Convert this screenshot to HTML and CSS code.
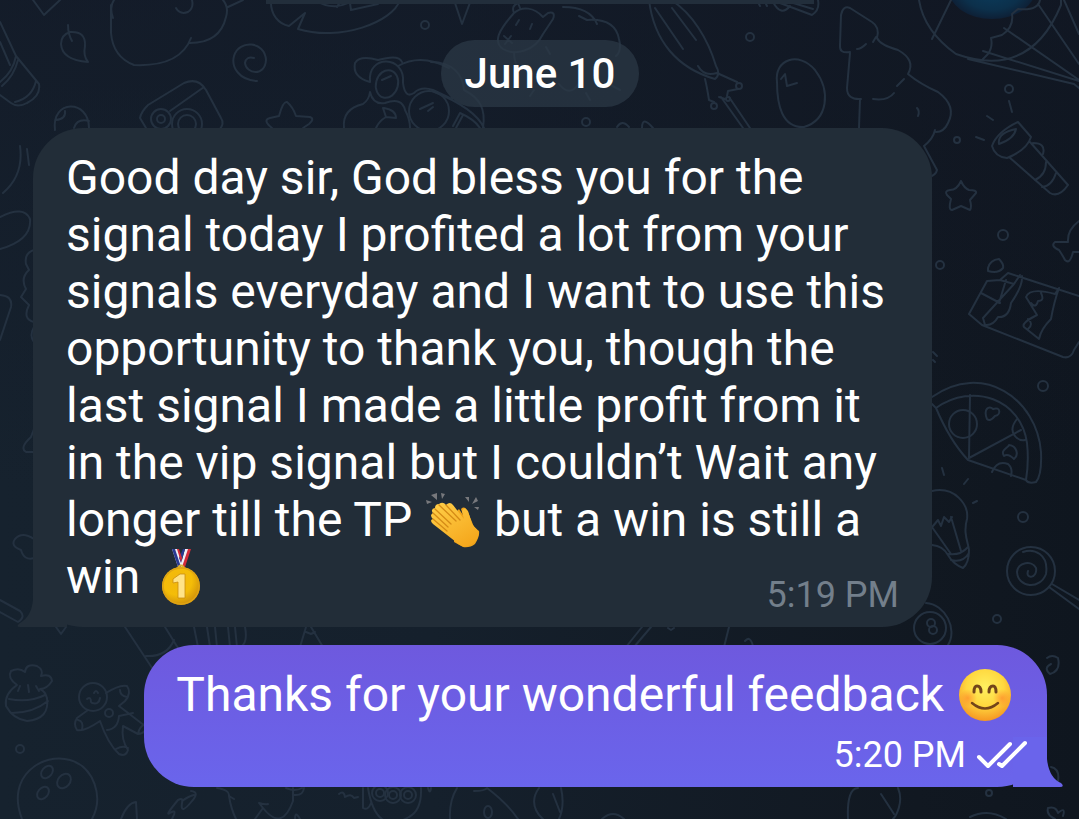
FILE: index.html
```html
<!DOCTYPE html>
<html lang="en">
<head>
    <meta charset="UTF-8">
    <meta name="viewport" content="width=device-width, initial-scale=1.0">
    <title>Chat</title>
    <link rel="stylesheet" href="styles.css">
</head>
<body>
    <!-- Wallpaper -->
    <svg class="wallpaper" viewBox="0 0 1079 819" preserveAspectRatio="xMidYMid slice" aria-hidden="true">
        <defs>
            <radialGradient id="glow" cx=".5" cy=".5" r=".5">
                <stop offset="0" stop-color="#0b3d5e"/>
                <stop offset=".7" stop-color="#0c304b"/>
                <stop offset="1" stop-color="#0e2036"/>
            </radialGradient>
        </defs>
        <ellipse cx="992" cy="-12" rx="44" ry="31" fill="url(#glow)"/>
        <g class="doodles">
            <!-- top left: crayon, leaf, cloud, spiral -->
            <path d="M33 0L44 15L60 0M0 22L16 56L39 84Q41 96 27 103Q18 108 11 103L0 95M0 42L10 65M16 56Q13 72 0 82M18 60Q14 76 2 86M36 81Q32 98 15 102"/>
            <path d="M68 25Q68 34 72 41M70 32Q61 35 61 44Q62 60 88 62Q83 56 85 46Q86 31 70 32"/>
            <path d="M114 0Q109 7 113 18M111 5V33Q113 57 134 65Q180 67 191 38M190 43Q220 43 226 17Q229 7 223 0M176 8Q180 15 188 12Q194 8 192 0M228 7L243 0"/>
            <path d="M257 81C239 80 231 67 234 56C239 39 265 41 266 60C265 77 246 74 245 63Q246 56 254 58"/>
            <path d="M271 0C270 15 279 24 289 26L305 13L298 29C340 42 393 22 400 0M315 0Q333 12 352 1M337 7L341 0M350 3L351 10L378 4"/>
            <circle cx="425" cy="25" r="4"/>
            <!-- egg, camera, star -->
            <path d="M55 130C51 99 89 99 89 128M65 111Q66 119 56 120M89 121Q77 118 74 128"/>
            <path d="M146 128L140 118Q141 112 148 105L184 83Q198 77 206 90L221 118Q225 124 219 130M204 87L170 111"/>
            <circle cx="161" cy="119" r="10"/><circle cx="161" cy="119" r="4"/>
            <circle cx="187" cy="124" r="15"/><circle cx="187" cy="124" r="9"/>
            <path d="M272 128Q262 120 270 118L279 116Q283 101 287 102Q293 107 296 116L310 117Q315 119 309 124L303 128"/>
            <!-- diver with goggles -->
            <path d="M370 82Q352 77 355 63Q360 55 378 60Q399 54 402 62M370 82C367 54 406 55 403 83Q405 99 414 93Q421 86 433 90L452 99M344 128Q342 109 363 104Q369 100 370 92Q373 105 385 103Q402 97 405 110Q410 119 410 128M398 66Q421 53 449 68M384 108Q396 110 396 118L386 117Q379 121 376 128M383 108L386 117M382 80L391 76M420 109L433 103M428 111L433 107"/>
            <ellipse cx="387" cy="84" rx="11" ry="14" transform="rotate(15 387 84)"/>
            <circle cx="429" cy="111" r="20"/>
            <path d="M431 62C453 62 463 75 464 90C480 98 486 109 483 128M432 91Q475 108 484 128M453 126L460 113Q474 119 480 128M456 128L463 115"/>
            <!-- sheep -->
            <path d="M454 0L462 24L471 0M514 13C498 31 493 42 503 49C515 56 535 51 543 34L553 19Q556 11 548 13L543 17C534 7 522 6 514 13Q511 6 518 3L520 8M514 52Q514 61 518 68M504 36L512 43M505 44L511 36M516 25L519 20M530 29L532 24M546 47L550 54M563 7Q590 7 597 24M587 20Q615 18 619 39Q622 51 616 56M579 16L587 20M559 84Q570 98 579 83M609 84L620 90M586 93L590 100M530 96L534 90"/>
            <circle cx="586" cy="122" r="4"/>
            <path d="M617 127Q622 119 629 127M642 128Q642 115 653 128"/>
            <!-- brush -->
            <path d="M649 0C654 41 677 68 715 79Q721 74 716 66C708 39 692 13 671 0M655 8L683 49M672 8L696 40M698 66Q704 77 717 73M705 79Q707 87 709 100L714 102M717 73L737 82M738 89L728 91L727 96M719 97Q722 98 725 99M721 97L743 128M729 97L750 128"/>
            <circle cx="739" cy="86" r="3"/><circle cx="714" cy="106" r="3"/><circle cx="728" cy="99" r="2"/>
            <circle cx="750" cy="37" r="4"/>
            <path d="M757 0L760 6M764 0L767 6M773 2Q781 17 790 6M780 3L812 15Q820 10 818 0M790 2L813 9"/>
            <path d="M777 82C774 59 799 51 815 70C831 91 828 120 804 127C782 128 777 105 777 82ZM781 79L785 74L787 86L797 83"/>
            <!-- tree -->
            <path d="M850 52Q839 54 840 45L841 15Q843 5 850 8L872 22Q880 27 877 38Q880 45 898 50Q916 60 908 74Q920 84 938 92Q957 106 948 123Q944 132 936 132M850 53L847 88Q847 100 861 99M860 99L859 128M935 130Q933 139 924 146M924 146L937 170Q936 175 929 177M876 37L873 42M857 49Q861 49 866 44M873 99Q888 101 894 93M897 86L904 79M917 108Q920 111 918 116"/>
            <!-- balloon -->
            <path d="M919 0Q924 31 956 54Q1030 80 1061 5V0M951 0L932 39M1040 0Q1038 11 1018 9L1012 14Q1014 27 1002 35L991 38Q993 47 988 54L983 59M1004 28L1079 80M983 51L1079 81M968 59L1074 84L1079 88M1064 0L1079 34M1038 4L1079 64"/>
            <!-- flashlight -->
            <circle cx="1009" cy="89" r="4"/><circle cx="957" cy="140" r="3"/>
            <path d="M1009 101L1012 112M987 116L993 120M976 137L984 140M992 146Q997 132 1018 122L1031 137Q1027 150 1007 158Q995 157 992 146ZM999 144Q997 133 1016 129Q1014 139 999 144M1009 157L1050 193Q1059 198 1068 185L1030 142M1033 143Q1046 143 1043 154M1046 162Q1046 175 1035 180M1056 173Q1052 186 1042 187"/>
            <path d="M961 181Q957 190 950 190Q944 191 947 195L951 199Q948 210 952 210L961 206L970 210Q972 207 970 200L976 193Q977 190 969 190Q964 188 961 181Z"/>
            <circle cx="1003" cy="235" r="5"/><circle cx="940" cy="265" r="4"/>
            <path d="M1079 221Q1067 230 1068 242L1055 242Q1050 246 1059 250Q1063 256 1065 260Q1070 265 1073 252L1079 252"/>
            <!-- juice box -->
            <path d="M988 268Q990 260 999 259Q1004 264 1003 268Q998 274 988 271ZM982 325L969 314L987 281L1000 280L1008 273L1079 296M982 325L1063 357Q1071 359 1074 350L1079 342M981 293L1000 303M1000 280L1014 284L983 318L985 325Q993 326 998 317Q1009 318 1011 303Q1023 286 1022 276M1014 284L1020 275M1006 280L999 303M1059 288L1055 294Q1030 287 1026 297L1037 315Q1021 323 1024 327L1039 339Q1041 329 1051 319Q1054 302 1059 288ZM1031 303Q1036 309 1038 301Q1045 301 1041 293M1028 319Q1034 324 1028 329"/>
            <circle cx="1043" cy="386" r="5"/>
            <path d="M933 352L937 356M933 360L935 362"/>
            <!-- pizza -->
            <path d="M932 397C983 361 1037 399 1041 452Q1042 475 1036 482Q1028 484 1026 480L968 460Q950 441 936 408L932 404M936 408C973 382 1021 399 1027 443Q1029 462 1026 480M970 395L969 458L1021 430M992 472Q997 460 1008 464Q1013 468 1011 476M1017 419Q1009 429 1015 436Q1019 441 1025 440"/>
            <circle cx="963" cy="424" r="14"/>
            <path d="M987 419C983 409 989 405 993 409C1001 406 1001 415 995 416Q990 422 987 419ZM1004 456C1000 450 1008 448 1009 445C1017 446 1019 455 1014 459Q1008 453 1004 456Z"/>
            <!-- bulb -->
            <path d="M942 468L944 475M964 484L968 479M973 503L977 501M932 491C955 486 969 505 967 519C963 533 968 542 969 550Q969 563 963 568Q953 564 948 555Q943 546 932 545M932 527L951 554M951 517L961 551M933 526L938 520L941 526L944 517L949 522L952 517M948 554Q960 556 968 547M951 560Q963 563 969 553"/>
            <circle cx="1023" cy="517" r="5"/>
            <!-- lollipop -->
            <circle cx="1031" cy="571" r="24"/>
            <path d="M1028 571C1025 580 1038 578 1036 568C1032 560 1018 562 1017 572C1018 588 1040 590 1046 574C1049 554 1034 548 1023 552M1049 587L1079 609M1052 584L1079 600"/>
            <circle cx="997" cy="619" r="4"/>
            <!-- billiard ball -->
            <circle cx="930" cy="628" r="16"/><circle cx="931" cy="623" r="4"/><circle cx="933" cy="630" r="4"/>
            <path d="M926 603C945 604 958 629 948 645M1047 658Q1052 654 1058 658Q1061 671 1050 674Q1043 668 1051 664"/>
            <!-- left side -->
            <path d="M20 146Q24 175 3 193M27 149L29 165M0 217Q24 205 30 219Q32 240 0 249M0 295Q13 296 11 307L0 340M34 250Q24 253 26 264L29 270Q20 278 26 289L21 297L29 305Q22 319 34 322M34 327Q29 336 34 342M34 429L31 437Q19 448 26 452L34 452M34 539Q22 531 15 539Q10 546 21 550Q24 561 34 558M0 600L20 611Q26 617 18 622L0 612"/>
            <path d="M56 627L61 634L66 627M125 627L160 680M165 627L178 648M174 640Q167 657 146 656M194 627L198 647M207 627L210 647M215 627L217 647M228 627L230 647M235 627L237 647M245 627Q248 642 241 647M306 627L300 647M311 627L323 647M306 632L311 634L315 632M642 627L626 647M651 627L634 647M668 628L671 630L674 628M729 627L724 647M745 641Q750 635 753 646"/>
            <!-- pot plant -->
            <path d="M17 685Q7 678 11 671Q19 667 25 672Q26 663 37 666Q44 670 41 676Q51 673 52 681Q47 689 40 689M17 685Q4 694 6 706Q13 719 27 721Q50 719 47 698Q45 691 40 689M9 699Q29 703 45 695M12 713Q33 713 48 701M20 686L18 691M28 685L29 692M36 686L39 691"/>
            <!-- gingerbread man -->
            <circle cx="93" cy="697" r="14"/><circle cx="109" cy="713" r="4"/>
            <path d="M106 693Q120 684 127 686Q132 693 125 701L119 706L145 726Q147 733 138 734L123 726Q121 740 128 750Q126 757 119 754Q108 744 100 721Q84 732 77 730Q73 724 77 718L88 710M120 690Q120 696 127 697M78 720Q84 721 82 730M116 749Q123 745 128 748M145 724Q139 727 138 734M107 730Q118 729 119 716L133 713M87 699Q91 696 91 702M94 693Q96 689 98 693M92 703Q99 705 100 698"/>
            <circle cx="20" cy="749" r="4"/>
            <!-- bowling ball -->
            <path d="M22 819C5 776 43 752 70 760C94 767 104 797 92 819"/>
            <ellipse cx="47" cy="772" rx="5" ry="7" transform="rotate(40 47 772)"/>
            <ellipse cx="64" cy="781" rx="6" ry="8" transform="rotate(40 64 781)"/>
            <ellipse cx="43" cy="793" rx="5" ry="7" transform="rotate(40 43 793)"/>
            <path d="M121 819Q127 803 136 802L137 819"/>
            <!-- bottom row -->
            <path d="M191 791Q200 792 192 801Q180 816 182 803Q184 797 178 800Q164 817 170 813Q178 808 172 819M182 801Q189 796 194 795M217 788Q230 790 229 796L234 799M229 796Q231 809 236 819M259 803L263 808L255 819M259 803Q266 805 268 804M263 808Q282 832 293 801V788M286 788Q295 792 302 788M294 795Q303 796 304 788M295 819Q295 810 300 819M339 794Q344 790 345 797Q351 793 354 798L358 797M363 788V808Q368 811 371 803M368 788Q376 836 409 817Q422 810 421 788M428 788Q430 795 431 788"/>
            <circle cx="380" cy="793" r="8"/><circle cx="393" cy="795" r="8"/><circle cx="408" cy="795" r="8"/>
            <circle cx="380" cy="793" r="4"/><circle cx="393" cy="795" r="4"/><circle cx="408" cy="795" r="4"/>
            <path d="M457 788Q449 801 450 819M474 791Q485 791 487 788Q507 803 518 819M539 788C526 806 543 819 543 819M561 788Q565 806 559 819M553 794L560 812M602 819Q613 809 624 819M848 819C847 798 851 788 858 788M898 788C904 802 896 816 893 819M881 794L894 814M970 817Q988 808 1006 819M1048 808Q1046 815 1055 819M1048 808Q1056 806 1058 813Q1066 806 1063 816M1051 767Q1060 769 1058 781"/>
            <circle cx="989" cy="793" r="3"/><ellipse cx="488" cy="812" rx="4" ry="6"/>
        </g>
    </svg>

    <main class="chat">
        <div class="top-edge"></div>
        <time class="date">June 10</time>

        <!-- Incoming -->
        <article class="message incoming">
            <p class="text">Good day sir, God bless you for the signal today I profited a lot from your signals everyday and I want to use this opportunity to thank you, though the last signal I made a little profit from it in the vip signal but I couldn’t Wait any longer till the TP
                <svg class="emoji" viewBox="0 0 56 56" role="img" aria-label="Clapping hands">
                    <defs>
                        <linearGradient id="hand" x1="0" y1="0" x2=".7" y2="1">
                            <stop offset="0" stop-color="#ffd04a"/>
                            <stop offset="1" stop-color="#f5a81d"/>
                        </linearGradient>
                    </defs>
                    <g fill="#77787c">
                        <path d="M6 3L12 1L12 8ZM16 1L20 2L17 7ZM1 8L7 10L2 12ZM51 5L47 12L53 9ZM40 5L44 5L44 10ZM49 15L54 15L53 18Z"/>
                    </g>
                    <path d="M30 21L34 17L38 23L36 17Q40 13 43 20L49 35L54 39Q55 44 50 52Q45 56 38 55L29 50Z" fill="#efa31a"/>
                    <path d="M14 12Q18 9 21 13Q25 9 28 13L39 27L37 19Q39 14 43 19L47 32Q52 37 54 41Q53 49 45 53Q38 57 31 50L8 32Q4 28 8 27Q4 23 8 21Q5 17 10 16Q10 12 14 12Z" fill="url(#hand)"/>
                    <path d="M10 17L26 32M14 13L31 29M21 13L35 28M8 21L23 35M8 27L22 39" fill="none" stroke="#d58b16" stroke-width="1.3" stroke-linecap="round"/>
                </svg>
                but a win is still a win
                <svg class="emoji" viewBox="0 0 56 56" role="img" aria-label="First place medal">
                    <defs>
                        <radialGradient id="medal" cx=".4" cy=".35" r=".7">
                            <stop offset="0" stop-color="#f2b70c"/>
                            <stop offset=".55" stop-color="#f4bd08"/>
                            <stop offset="1" stop-color="#ca8b0b"/>
                        </radialGradient>
                    </defs>
                    <path d="M19 0H25L29 11L32 0H37L31 18H25Z" fill="#efeff5"/>
                    <path d="M19 0H22L28 18H25ZM30 0H32L28 14L26 9Z" fill="#293a92"/>
                    <path d="M24 0H26L29 9L28 13ZM35 0H38L32 18H29Z" fill="#d42b39"/>
                    <circle cx="28" cy="19" r="2.5" fill="none" stroke="#d9ae37" stroke-width="2"/>
                    <circle cx="28" cy="37" r="19" fill="url(#medal)"/>
                    <circle cx="28" cy="37" r="18" fill="none" stroke="#dea315" stroke-width="1.5"/>
                    <path d="M20 30L27 25H32V49H25V33L20 34Z" fill="#ffe387" stroke="#c98d10" stroke-width=".8"/>
                </svg>
                <time class="time">5:19 PM</time></p>
            <svg class="tail" viewBox="0 0 50 50" aria-hidden="true"><path d="M16 0V22Q15 39 3 46Q-2 50 3 50H50V0Z"/></svg>
        </article>

        <!-- Outgoing -->
        <article class="message outgoing">
            <p class="text">Thanks for your wonderful feedback
                <svg class="emoji" viewBox="0 0 56 56" role="img" aria-label="Smiling face">
                    <defs>
                        <radialGradient id="face" cx=".5" cy=".35" r=".65">
                            <stop offset="0" stop-color="#fff060"/>
                            <stop offset=".55" stop-color="#ffd83f"/>
                            <stop offset="1" stop-color="#f69722"/>
                        </radialGradient>
                        <radialGradient id="blush">
                            <stop offset="0" stop-color="#ff7627" stop-opacity=".55"/>
                            <stop offset="1" stop-color="#ff7627" stop-opacity="0"/>
                        </radialGradient>
                    </defs>
                    <circle cx="28" cy="28" r="26" fill="url(#face)"/>
                    <circle cx="11" cy="31" r="9" fill="url(#blush)"/>
                    <circle cx="45" cy="31" r="9" fill="url(#blush)"/>
                    <path d="M17 25Q17 19 20 19Q24 19 24 25M32 25Q32 19 36 19Q39 19 39 25" fill="none" stroke="#73451a" stroke-width="3" stroke-linecap="round"/>
                    <path d="M15 36Q28 47 41 36" fill="none" stroke="#73451a" stroke-width="2.5" stroke-linecap="round"/>
                </svg></p>
            <div class="meta">
                <time class="time">5:20 PM</time>
                <svg class="checks" viewBox="0 0 52 30" role="img" aria-label="Read">
                    <path d="M3 17L12 26L34 4M23 24L26 26L49 3"/>
                </svg>
            </div>
            <svg class="tail" viewBox="0 0 50 50" aria-hidden="true"><path d="M34 0V22Q36 41 48 46Q52 50 47 50H0V0Z"/></svg>
        </article>
    </main>
</body>
</html>
```
FILE: styles.css
```css
* {
    box-sizing: border-box;
}
body {
    margin: 0;
    min-height: 100vh;
    font-family: Roboto, "Liberation Sans", sans-serif;
    color: #fff;
    background: linear-gradient(to right, #16222e 0%, #15202c 40%, #111821 85%, #0f161f 100%);
    overflow-x: hidden;
}

/* Wallpaper */
.wallpaper {
    position: absolute;
    top: 0;
    left: 0;
    width: 100%;
    height: 100%;
    background: linear-gradient(to bottom, rgba(18, 24, 38, 0.6), rgba(18, 24, 38, 0) 60%);
}
.doodles {
    fill: none;
    stroke: #243140;
    stroke-width: 2;
    stroke-linecap: round;
    stroke-linejoin: round;
}

/* Chat */
.chat {
    position: relative;
    display: flex;
    flex-direction: column;
    padding: 0 32px 32px 33px;
}
.top-edge {
    width: 54%;
    height: 4px;
    margin: 0 auto 36px;
    background-color: #222e3b;
}
.date {
    align-self: center;
    padding: 10px 24px 9px;
    margin-bottom: 21px;
    border-radius: 34px;
    background-color: rgba(43, 56, 69, 0.75);
    font-size: 42px;
    font-weight: 500;
    line-height: 48px;
}

/* Messages */
.message {
    position: relative;
    max-width: 899px;
    border-radius: 50px;
    isolation: isolate;
}
.text {
    margin: 0;
    font-size: 48px;
    line-height: 57px;
}
.time {
    font-size: 36px;
    line-height: 42px;
}
.emoji {
    width: 56px;
    height: 56px;
    margin: -4px 1px;
    vertical-align: -8px;
}
.tail {
    position: absolute;
    bottom: 0;
    z-index: -1;
    width: 50px;
    height: 50px;
}
.incoming {
    align-self: flex-start;
    padding: 21px 33px 22px;
    margin-bottom: 18px;
    background-color: #222d38;
}
.incoming .time {
    float: right;
    margin: 26px 0 -12px;
    color: #737f8b;
}
.incoming .tail {
    left: -16px;
    fill: #222d38;
}
.outgoing {
    align-self: flex-end;
    max-width: 100%;
    padding: 21px 33px 11px 32px;
    background: linear-gradient(#6e59de, #6a65ec);
}
.outgoing .tail {
    right: -16px;
    fill: #6a64eb;
}
.meta {
    display: flex;
    justify-content: flex-end;
    align-items: center;
    gap: 10px;
    margin: 11px -14px 0 0;
}
.checks {
    width: 52px;
    height: 30px;
    fill: none;
    stroke: #fff;
    stroke-width: 4;
    stroke-linecap: round;
    stroke-linejoin: round;
}
```
